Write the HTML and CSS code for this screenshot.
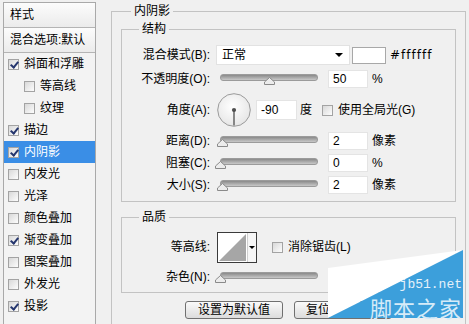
FILE: index.html
```html
<!DOCTYPE html>
<html lang="zh-CN">
<head>
  <meta charset="UTF-8">
  <title>图层样式 - 内阴影</title>
  <link rel="stylesheet" href="styles.css">
</head>
<body>
  <div class="dialog">
    <aside class="styles">
      <div class="styles-head">样式</div>
      <div class="styles-head">混合选项:默认</div>
      <ul class="style-list">
        <li><span class="cb on"></span>斜面和浮雕</li>
        <li class="sub"><span class="cb"></span>等高线</li>
        <li class="sub"><span class="cb"></span>纹理</li>
        <li><span class="cb on"></span>描边</li>
        <li class="active"><span class="cb on"></span>内阴影</li>
        <li><span class="cb"></span>内发光</li>
        <li><span class="cb"></span>光泽</li>
        <li><span class="cb"></span>颜色叠加</li>
        <li><span class="cb on"></span>渐变叠加</li>
        <li><span class="cb"></span>图案叠加</li>
        <li><span class="cb"></span>外发光</li>
        <li><span class="cb on"></span>投影</li>
      </ul>
    </aside>

    <fieldset class="group outer">
      <legend>内阴影</legend>
      <div class="outer-body">
        <fieldset class="group">
          <legend>结构</legend>
          <div class="rows">
            <div class="row">
              <span class="lbl">混合模式(B):</span>
              <div class="select">正常<span class="caret"></span></div>
              <span class="swatch"></span>
              <span class="hex">#ffffff</span>
            </div>
            <div class="row spaced">
              <span class="lbl">不透明度(O):</span>
              <div class="slider">
                <svg class="thumb" style="left: 50%" width="11" height="8" viewBox="0 0 11 8"><path d="M5.5 0.5 L10.5 5 L10.5 7.5 L0.5 7.5 L0.5 5 Z" fill="#ececec" stroke="#8a8a8a"/></svg>
              </div>
              <span class="num">50</span>
              <span class="unit">%</span>
            </div>
            <div class="row spaced dial-row">
              <span class="lbl">角度(A):</span>
              <svg class="dial" width="34" height="34" viewBox="0 0 34 34">
                <defs>
                  <radialGradient id="dialfill" cx="45%" cy="40%" r="65%">
                    <stop offset="0" stop-color="#ffffff"/>
                    <stop offset="1" stop-color="#e4e4e4"/>
                  </radialGradient>
                </defs>
                <circle cx="17" cy="17" r="16.3" fill="url(#dialfill)" stroke="#9a9a9a"/>
                <line x1="17" y1="17" x2="17" y2="32.5" stroke="#6c6c6c" stroke-width="1.6"/>
                <circle cx="17" cy="17" r="2.1" fill="#4e4e4e"/>
              </svg>
              <span class="num angle">-90</span>
              <span class="deg">度</span>
              <span class="cb global"></span>
              <span>使用全局光(G)</span>
            </div>
            <div class="row spaced">
              <span class="lbl">距离(D):</span>
              <div class="slider">
                <svg class="thumb" style="left: 3%" width="11" height="8" viewBox="0 0 11 8"><path d="M5.5 0.5 L10.5 5 L10.5 7.5 L0.5 7.5 L0.5 5 Z" fill="#ececec" stroke="#8a8a8a"/></svg>
              </div>
              <span class="num">2</span>
              <span class="unit">像素</span>
            </div>
            <div class="row">
              <span class="lbl">阻塞(C):</span>
              <div class="slider">
                <svg class="thumb" style="left: 0%" width="11" height="8" viewBox="0 0 11 8"><path d="M5.5 0.5 L10.5 5 L10.5 7.5 L0.5 7.5 L0.5 5 Z" fill="#ececec" stroke="#8a8a8a"/></svg>
              </div>
              <span class="num">0</span>
              <span class="unit">%</span>
            </div>
            <div class="row">
              <span class="lbl">大小(S):</span>
              <div class="slider">
                <svg class="thumb" style="left: 3%" width="11" height="8" viewBox="0 0 11 8"><path d="M5.5 0.5 L10.5 5 L10.5 7.5 L0.5 7.5 L0.5 5 Z" fill="#ececec" stroke="#8a8a8a"/></svg>
              </div>
              <span class="num">2</span>
              <span class="unit">像素</span>
            </div>
          </div>
        </fieldset>

        <fieldset class="group quality">
          <legend>品质</legend>
          <div class="rows quality-rows">
            <div class="row contour-row">
              <span class="lbl">等高线:</span>
              <div class="contour">
                <svg width="29" height="29" viewBox="0 0 29 29">
                  <rect width="29" height="29" fill="#fff"/>
                  <polygon points="1,28 28,1 28,28" fill="#a6a6a6"/>
                </svg>
                <span class="contour-drop"><span class="caret small"></span></span>
              </div>
              <span class="cb aa"></span>
              <span>消除锯齿(L)</span>
            </div>
            <div class="row noise-row">
              <span class="lbl">杂色(N):</span>
              <div class="slider">
                <svg class="thumb" style="left: 0%" width="11" height="8" viewBox="0 0 11 8"><path d="M5.5 0.5 L10.5 5 L10.5 7.5 L0.5 7.5 L0.5 5 Z" fill="#ececec" stroke="#8a8a8a"/></svg>
              </div>
              <span class="num">0</span>
              <span class="unit">%</span>
            </div>
          </div>
        </fieldset>

        <div class="actions">
          <button class="btn">设置为默认值</button>
          <button class="btn btn-reset">复位</button>
        </div>
      </div>
    </fieldset>
  </div>

  <div class="watermark">
    <svg class="wm-bg" width="138" height="72" viewBox="0 0 138 72">
      <polygon points="1,20 136,2 1,70" fill="#ffffff"/>
      <polygon points="136,2 136,70 1,70" fill="#3c9fdb"/>
    </svg>
    <span class="wm-url">jb51.net</span>
    <span class="wm-name">脚本之家</span>
  </div>
</body>
</html>
```

FILE: styles.css
```css
* {
  box-sizing: border-box;
}

body {
  margin: 0;
  width: 469px;
  height: 324px;
  overflow: hidden;
  position: relative;
  background: #f0f0f0;
  font-family: "Liberation Sans", "Noto Sans CJK SC", sans-serif;
  font-size: 12px;
  line-height: 14px;
  color: #000;
}

.dialog {
  display: flex;
  align-items: flex-start;
  padding: 2px 0 0 3px;
}

/* left list of styles */
.styles {
  width: 93px;
  height: 322px;
  flex: none;
  border: 1px solid #a9a9a9;
  border-bottom: 0;
  background: #f3f3f3;
}

.styles-head {
  height: 25px;
  display: flex;
  align-items: center;
  padding-left: 6px;
  border-bottom: 1px solid #b4b4b4;
  background: linear-gradient(#fcfcfc, #ebebeb);
}

.style-list {
  list-style: none;
  margin: 0;
  padding: 0;
}

.style-list li {
  height: 22px;
  display: flex;
  align-items: center;
  padding-left: 4px;
}

.style-list li.sub {
  padding-left: 20px;
}

.style-list li.active {
  background: #3a8ee6;
  color: #fff;
}

.cb {
  position: relative;
  width: 11px;
  height: 11px;
  flex: none;
  margin-right: 5px;
  border: 1px solid #a3a3a3;
  background: linear-gradient(135deg, #d8d8d8, #fdfdfd);
}

.cb.on::after {
  content: "";
  position: absolute;
  left: 3px;
  top: 0;
  width: 3px;
  height: 6px;
  border: solid #25366e;
  border-width: 0 2px 2px 0;
  transform: rotate(40deg);
}

/* group boxes */
.group {
  margin: 0;
  padding: 0;
  min-width: 0;
  border: 1px solid #c3c3c3;
}

.group legend {
  margin-left: 17px;
  padding: 0 3px;
  line-height: 14px;
}

.outer {
  width: 355px;
  height: 320px;
  flex: none;
  margin: 2px 0 0 15px;
  border-bottom: 0;
}

.outer > legend {
  margin-left: 19px;
}

.outer-body {
  padding: 4px 9px 0;
}

.quality {
  margin-top: 8px;
}

.rows {
  padding: 8px 0 5px;
}

.quality-rows {
  padding: 7px 0 4px;
}

.row {
  display: flex;
  align-items: center;
  height: 22px;
}

.row.spaced {
  margin-top: 2px;
}

.row.dial-row {
  height: 36px;
}

.contour-row {
  height: 32px;
}

.noise-row {
  margin-top: 3px;
}

.lbl {
  width: 88px;
  flex: none;
  margin-right: 6px;
  text-align: right;
}

/* controls */
.select {
  width: 134px;
  height: 20px;
  display: flex;
  align-items: center;
  justify-content: space-between;
  padding: 0 6px 0 5px;
  background: #fff;
  border: 1px solid #e2e2e2;
}

.caret {
  width: 0;
  height: 0;
  border-left: 4px solid transparent;
  border-right: 4px solid transparent;
  border-top: 4px solid #000;
}

.caret.small {
  border-left-width: 3px;
  border-right-width: 3px;
  border-top-width: 3px;
}

.swatch {
  width: 34px;
  height: 17px;
  margin-left: 2px;
  background: #fff;
  border: 1px solid #a8a8a8;
}

.hex {
  margin-left: 4px;
  font-family: "DejaVu Sans", sans-serif;
  letter-spacing: 1px;
}

.slider {
  position: relative;
  width: 98px;
  height: 11px;
  margin-left: 4px;
}

.slider::before {
  content: "";
  position: absolute;
  left: 0;
  right: 0;
  top: 0;
  height: 5px;
  border-radius: 3px;
  border: 1px solid #9b9b9b;
  background: linear-gradient(#8a8a8a, #c8c8c8);
}

.thumb {
  position: absolute;
  top: 3px;
  margin-left: -5.5px;
}

.num {
  width: 40px;
  height: 18px;
  margin-left: 10px;
  display: flex;
  align-items: center;
  padding-left: 4px;
  background: #fff;
  border: 1px solid #e4e4e4;
}

.unit {
  margin-left: 4px;
}

.dial {
  margin-left: 1px;
  flex: none;
}

.num.angle {
  width: 41px;
  height: 20px;
  margin-left: 5px;
}

.deg {
  margin-left: 3px;
}

.cb.global {
  margin-left: 10px;
}

.contour {
  width: 40px;
  height: 31px;
  margin-left: 1px;
  display: flex;
  border: 1px solid #3a3a3a;
  background: #fff;
}

.contour-drop {
  width: 9px;
  display: flex;
  align-items: center;
  justify-content: center;
  border-left: 1px solid #cfcfcf;
  background: #f6f6f6;
}

.cb.aa {
  margin-left: 15px;
}

.actions {
  display: flex;
  gap: 11px;
  margin-top: 8px;
  padding-left: 64px;
}

.btn {
  width: 98px;
  height: 18px;
  padding: 0;
  font: inherit;
  color: #000;
  border: 1px solid #707070;
  border-radius: 3px;
  background: linear-gradient(#fafafa, #dcdcdc);
}

.btn-reset {
  text-align: left;
  padding-left: 11px;
}

/* site watermark in the corner */
.watermark {
  position: absolute;
  left: 327px;
  top: 248px;
  width: 138px;
  height: 72px;
  display: flex;
  flex-direction: column;
  justify-content: flex-end;
  align-items: flex-end;
  padding: 0 3px 2px 0;
}

.wm-bg {
  position: absolute;
  left: 0;
  top: 0;
}

.wm-url {
  position: relative;
  margin-bottom: 5px;
  font-family: "Liberation Mono", monospace;
  font-size: 13px;
  line-height: 13px;
  color: #e4f1fa;
}

.wm-name {
  position: relative;
  font-family: "Noto Sans CJK SC", sans-serif;
  font-size: 22px;
  line-height: 22px;
  letter-spacing: 1px;
  color: #d6ebf8;
}
```
